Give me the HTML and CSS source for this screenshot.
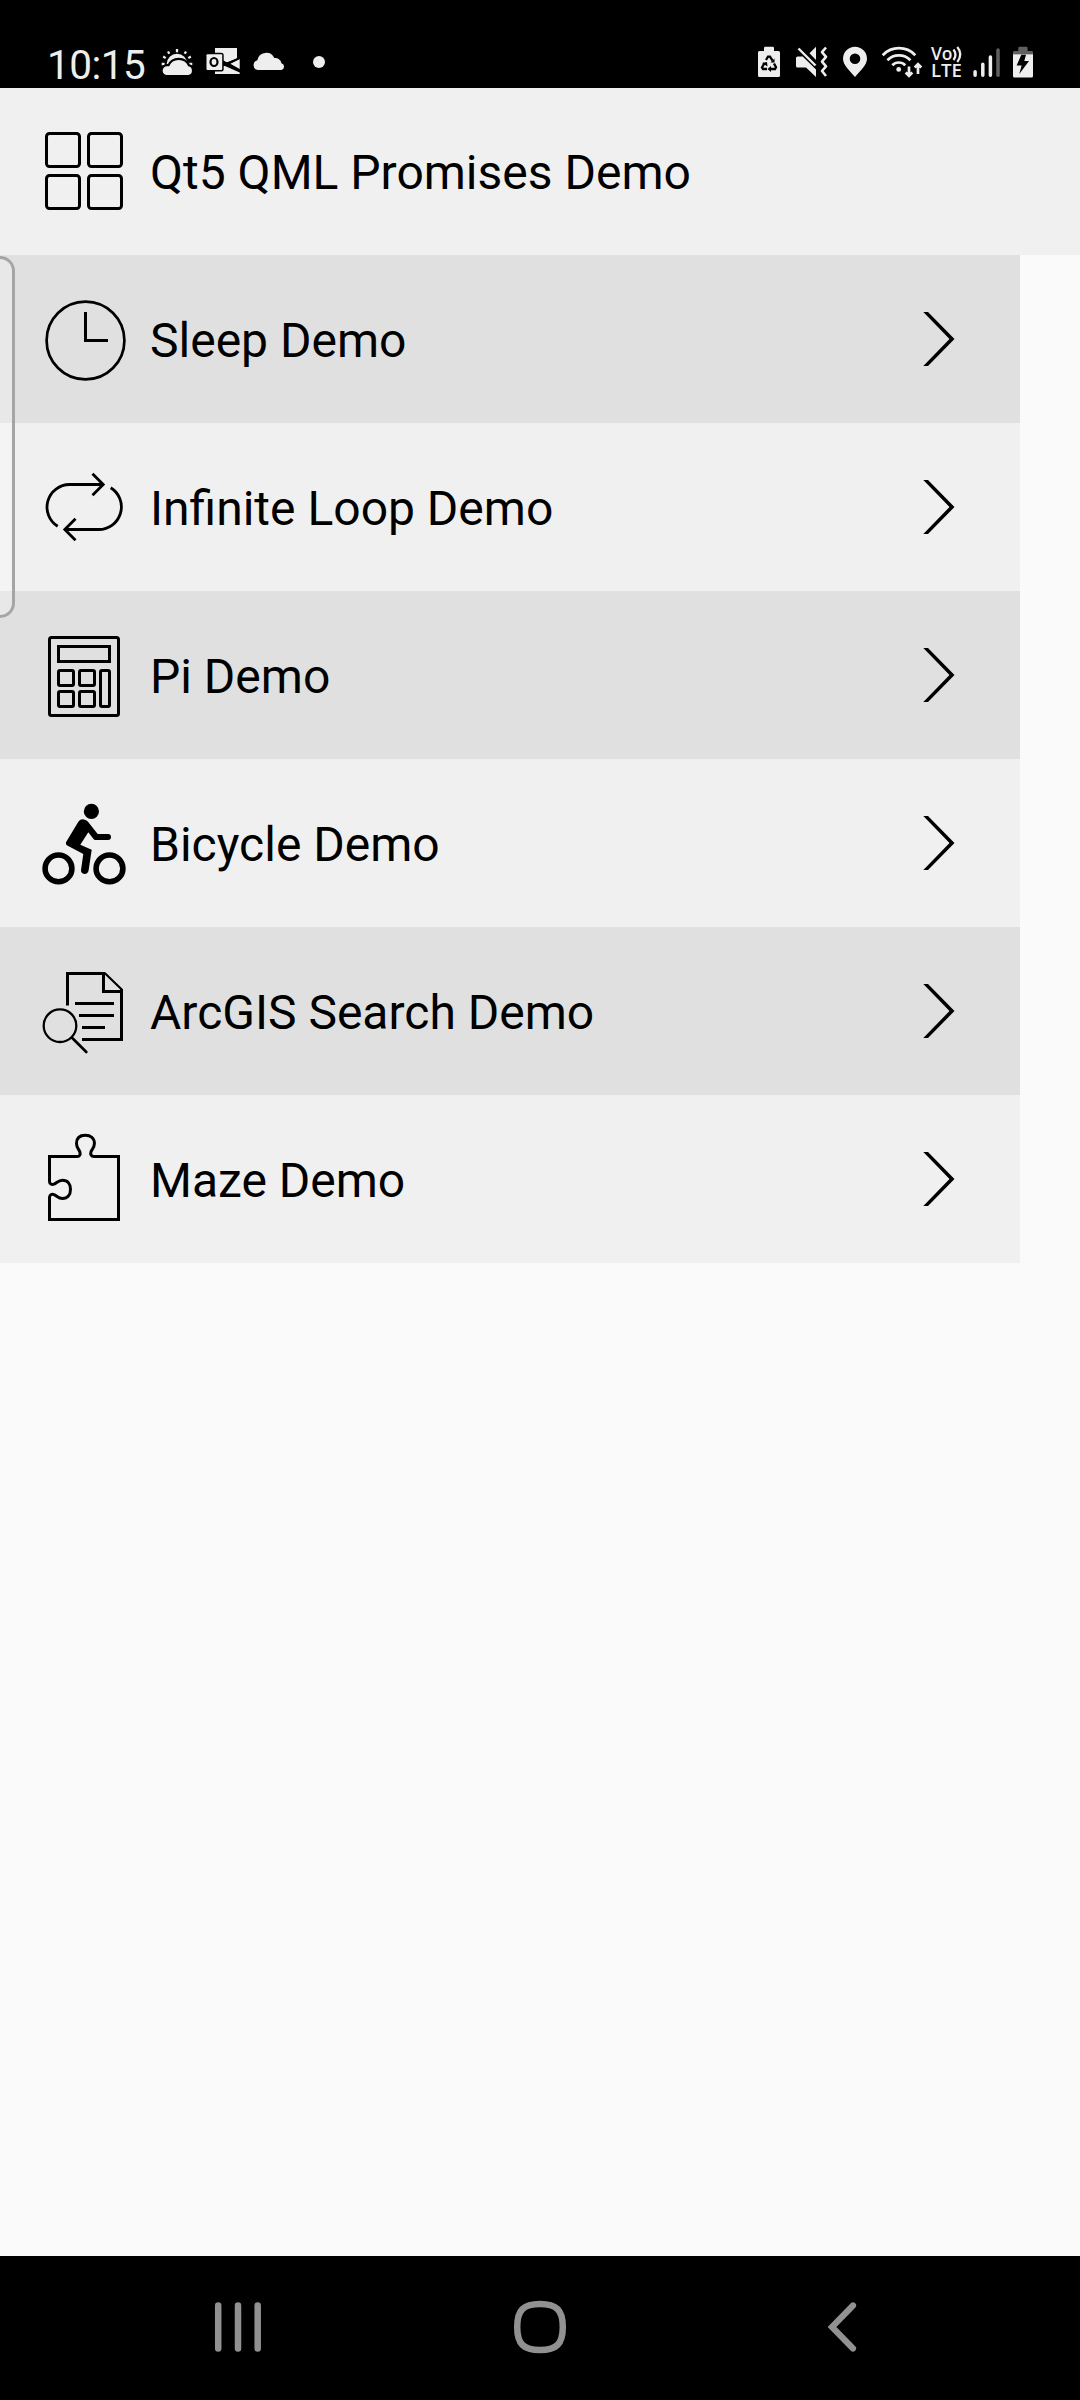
FILE: index.html
```html
<!DOCTYPE html>
<html lang="en">
<head>
<meta charset="utf-8">
<title>Qt5 QML Promises Demo</title>
<link rel="stylesheet" href="styles.css">
</head>
<body>
<div class="status-bar">
  <span class="clock">10:15</span>
  <svg class="weather" width="32" height="40" viewBox="161 44 32 40">
    <circle cx="177" cy="64" r="10.3" fill="#eee"/>
    <path d="M177 49v3.200M168 51.500l1.300 2.300M186 51.500l-1.300 2.300M163.200 56.500l2.500 1.600M190.800 56.500l-2.500 1.600M161.700 64h3M192.300 64h-3" stroke="#eee" stroke-width="2.300"/>
    <path d="M167 75a4.300 4.300 0 0 1 0-8.700h2.200a10.300 10.300 0 0 1 19 0a4.400 4.400 0 0 1 0 8.700z" fill="#eee" stroke="#000" stroke-width="4.500" paint-order="stroke"/>
  </svg>
  <svg class="mail" width="34" height="40" viewBox="206 44 34 40">
    <path d="M215 48h22v10.500l-10.500 4l-11.500-4zM239.700 58.800v10.400l-9.500-5.400zM215 74v-8h10l14.700 6.500v1.500z" fill="#eee"/>
    <path d="M222 61l18 9.500M227 64l13-6" stroke="#000" stroke-width="2"/>
    <rect x="206.500" y="54.300" width="15.700" height="15.700" rx="1" fill="#eee" stroke="#000" stroke-width="3" paint-order="stroke"/>
    <ellipse cx="214" cy="62" rx="3.500" ry="4" fill="none" stroke="#000" stroke-width="2.200"/>
  </svg>
  <svg class="cloud" width="34" height="40" viewBox="252 44 34 40">
    <path d="M257.800 70a5 5 0 0 1-.5-9.800a9 9 0 0 1 17-2.100a6.200 6.200 0 0 1 7.200 5.100a3.500 3.500 0 0 1-.2 6.800z" fill="#eee"/>
  </svg>
  <svg class="more" width="12" height="40" viewBox="313 44 12 40"><circle cx="319" cy="62" r="6" fill="#eee"/></svg>

  <div class="system-icons">
    <svg class="saver" width="22" height="40" viewBox="758 44 22 40">
      <path d="M764 51v-3q0-1.300 1.300-1.300h7.400q1.300 0 1.300 1.300v3h4.500q1.500 0 1.500 1.500v23q0 1.500-1.500 1.500h-19q-1.500 0-1.500-1.500v-23q0-1.500 1.500-1.500z" fill="#eee"/>
      <path d="M766 60l2-3.300h2l2.500 4M774 63.500l2 3.800l-1 1.700h-5M767 69h-4l-1-1.500l2.500-4.500" fill="none" stroke="#000" stroke-width="2.300"/>
      <path d="M774.500 58.500v4h-4zM771 66v6l-3.500-3zM762 63l5-1l.5 4.500z" fill="#000"/>
    </svg>
    <svg class="mute" width="32" height="40" viewBox="796 44 32 40">
      <path d="M796 58q0-1.500 1.500-1.500h5.200l13.300 13v7.500l-10-9.500h-8.500q-1.500 0-1.500-1.500zM816 46.700v13.300l-6.500-6.700z" fill="#eee"/>
      <path d="M798.500 48.500l17 17" stroke="#eee" stroke-width="2.400"/>
      <path d="M826 47.500l-4 4.700l4 4.700l-4 4.700l4 4.700l-4 4.700l4 5" fill="none" stroke="#eee" stroke-width="2.600" stroke-linejoin="round"/>
    </svg>
    <svg class="pin" width="24" height="40" viewBox="843 44 24 40">
      <path fill-rule="evenodd" d="M855 77C850 71 843 65 843 58.700a12 12 0 0 1 24 0C867 65 860 71 855 77zM849.700 58.700a5.300 5.300 0 1 0 10.600 0a5.300 5.300 0 1 0-10.600 0z" fill="#eee"/>
    </svg>
    <svg class="wifi" width="42" height="40" viewBox="881 44 42 40">
      <g fill="none" stroke="#eee" stroke-width="2.700">
        <path d="M882.700 55.200a22.500 22.500 0 0 1 32.600 0M887.400 60.300a16 16 0 0 1 23 0M892.300 65.300a9 9 0 0 1 13 0"/>
        <path d="M909 66.500v9M905.700 72.500l3.300 3.300l3.300-3.300M918 74v-9M914.700 67.500l3.300-3.300l3.300 3.300"/>
      </g>
      <circle cx="898.700" cy="69.400" r="2.400" fill="#eee"/>
    </svg>
    <svg class="volte" width="32" height="40" viewBox="931 44 32 40">
      <text class="volte-text" x="931" y="60.300" textLength="21.500" lengthAdjust="spacingAndGlyphs">Vo</text>
      <text class="volte-text" x="931" y="77" textLength="31" lengthAdjust="spacingAndGlyphs">LTE</text>
      <path d="M953.500 49.500q3.800 5.300 0 10.500M957.300 47q6 7.300 0 15" fill="none" stroke="#eee" stroke-width="2.300"/>
    </svg>
    <svg class="signal" width="27" height="40" viewBox="973 44 27 40">
      <path d="M975.100 71.700v3.600M982.800 64.300v11M990.400 57v18.300" stroke="#eee" stroke-width="3.500" stroke-linecap="round"/>
      <path d="M998 50v25.300" stroke="#606060" stroke-width="3.500" stroke-linecap="round"/>
    </svg>
    <svg class="battery" width="20" height="40" viewBox="1013 44 20 40">
      <path d="M1013 54.300v-2q0-1.300 1.300-1.300h4v-3q0-1.300 1.300-1.300h6.700q1.300 0 1.300 1.300v3h4q1.400 0 1.400 1.300v2z" fill="#606060"/>
      <path d="M1013 54.300h20v21.700q0 1.500-1.500 1.500h-17q-1.500 0-1.500-1.500z" fill="#eee"/>
      <path d="M1021.300 54.700h4.700l-1.700 6.300h4.700l-9.700 13l2.300-8.500h-5z" fill="#000"/>
    </svg>
  </div>
</div>

<header class="title-bar">
  <svg class="icon" viewBox="0 0 96 96">
    <rect x="10.500" y="10.500" width="33" height="33" rx="3"/><rect x="52.500" y="10.500" width="33" height="33" rx="3"/>
    <rect x="10.500" y="52.500" width="33" height="33" rx="3"/><rect x="52.500" y="52.500" width="33" height="33" rx="3"/>
  </svg>
  <h1 class="label">Qt5 QML Promises Demo</h1>
</header>

<main class="content">
  <ul class="menu">
    <li class="row">
      <svg class="icon" viewBox="0 0 96 96"><circle cx="49.500" cy="49.500" r="38.900" stroke-width="2.700"/><path d="M49.500 21v28.500H72"/></svg>
      <span class="label">Sleep Demo</span>
      <svg class="chevron" viewBox="0 0 32 54"><path d="M.3 0H5L31.500 27L5 54H.3L26.500 27z"/></svg>
    </li>
    <li class="row">
      <svg class="icon" viewBox="0 0 96 96"><path d="M67 25.500H33.700A22.600 22.600 0 0 0 21.700 67.300M56.500 14.800L67.200 25.500L56.500 36.200M74.700 28.700A22.600 22.600 0 0 1 62.500 70.500H29M39.500 59.800L28.800 70.500L39.500 81.200" stroke-width="2.800"/></svg>
      <span class="label">Infinite Loop Demo</span>
      <svg class="chevron" viewBox="0 0 32 54"><path d="M.3 0H5L31.500 27L5 54H.3L26.500 27z"/></svg>
    </li>
    <li class="row">
      <svg class="icon" viewBox="0 0 96 96">
        <rect x="13.500" y="10.500" width="69" height="78" rx="2"/><rect x="22.500" y="19.500" width="51" height="15"/>
        <rect x="22.500" y="43.500" width="15" height="15" rx="1.500"/><rect x="43.500" y="43.500" width="15" height="15" rx="1.500"/>
        <rect x="22.500" y="64.500" width="15" height="15" rx="1.500"/><rect x="43.500" y="64.500" width="15" height="15" rx="1.500"/>
        <rect x="64.500" y="43.500" width="9" height="36" rx="1.500"/>
      </svg>
      <span class="label">Pi Demo</span>
      <svg class="chevron" viewBox="0 0 32 54"><path d="M.3 0H5L31.500 27L5 54H.3L26.500 27z"/></svg>
    </li>
    <li class="row">
      <svg class="icon" viewBox="0 0 96 96">
        <circle cx="22.500" cy="73.400" r="13.400" stroke-width="5.600"/><circle cx="73.500" cy="73.400" r="13.400" stroke-width="5.600"/>
        <circle class="solid" cx="55.400" cy="16.400" r="7.600"/>
        <path class="solid" d="M42.500 26.500Q44.500 23.800 48 24.400Q50.200 24.700 51.800 26.600L61.700 39H72a3 3 0 0 1 0 6H59.200Q58.300 45 57.700 44.200L52.300 37.300L44.300 49.700L55.700 54.700L52.600 75.500Q51.800 79 48.500 78.900Q44.800 78.500 45 75L47.300 59L30.800 50.300Q29.500 49 30 47.200z"/>
      </svg>
      <span class="label">Bicycle Demo</span>
      <svg class="chevron" viewBox="0 0 32 54"><path d="M.3 0H5L31.500 27L5 54H.3L26.500 27z"/></svg>
    </li>
    <li class="row">
      <svg class="icon" viewBox="0 0 96 96">
        <path d="M31.500 42.500V10.500H69M67.500 10.500V28.500H85.500M39 40.500H78M43 52.500H78M46 64.500H69M85.500 26V76.500H46"/>
        <path d="M68.700 10L86 26.700" stroke-width="2.200"/>
        <circle cx="24" cy="62.700" r="16.300" stroke-width="2.300"/>
        <path d="M36 74.700L50.300 89" stroke-width="2.700" stroke-linecap="round"/>
      </svg>
      <span class="label">ArcGIS Search Demo</span>
      <svg class="chevron" viewBox="0 0 32 54"><path d="M.3 0H5L31.500 27L5 54H.3L26.500 27z"/></svg>
    </li>
    <li class="row">
      <svg class="icon" viewBox="0 0 96 96">
        <path d="M13.500 51V25.500H41C44 25.500 44.600 23.300 43.800 20.800C43 18.300 40.500 17 40.500 12.500C40.500 7 44 4.300 49.300 4.300S58.400 7 58.400 12.500C58.400 17 55.800 18.300 55 20.800C54.200 23.300 55 25.500 58 25.500H82.500V88.500H13.500V66.500C13.500 63.500 16 62.700 18.500 63.800C21 65 22.500 67.400 26.500 67.400C31.500 67.400 34.500 64 34.500 58.300S31.500 49.300 26.500 49.300C22.500 49.300 21 51.700 18.500 52.900C16 54 13.500 53.300 13.500 50.500"/>
      </svg>
      <span class="label">Maze Demo</span>
      <svg class="chevron" viewBox="0 0 32 54"><path d="M.3 0H5L31.500 27L5 54H.3L26.500 27z"/></svg>
    </li>
  </ul>
  <div class="edge-handle"></div>
</main>

<nav class="nav-bar">
  <svg width="48" height="56" viewBox="214 2299 48 56"><path d="M218.200 2305.500v43M238 2305.500v43M257.700 2305.500v43" stroke-width="6.500" stroke-linecap="round"/></svg>
  <svg class="home" width="54" height="56" viewBox="513 2299 54 56"><path d="M540 2304C556.500 2304 562.800 2310 562.800 2327S556.500 2350 540 2350S517.200 2344 517.200 2327S523.500 2304 540 2304z" stroke-width="6.500"/></svg>
  <svg class="back" width="32" height="56" viewBox="827 2299 32 56"><path d="M853 2305.500L832 2327L853 2348.500" stroke-width="6.200" stroke-linecap="round"/></svg>
</nav>
</body>
</html>
```
FILE: styles.css
```css
* { box-sizing: border-box; }

body {
  margin: 0;
  width: 1080px;
  height: 2400px;
  display: flex;
  flex-direction: column;
  background: #fafafa;
  color: #000;
  font-family: Roboto, sans-serif;
}

svg { display: block; flex: none; }

.status-bar {
  position: relative;
  z-index: 1;
  display: flex;
  align-items: flex-start;
  height: 88px;
  padding: 44px 47px 0;
  background: #000;
  color: #eee;
}

.clock {
  width: 114px;
  padding-top: 1px;
  font-size: 40.5px;
  line-height: 40px;
  letter-spacing: -0.5px;
}

.mail { margin-left: 13px; }
.cloud { margin-left: 12px; }
.more { margin-left: 27px; }

.system-icons { display: flex; margin-left: auto; }
.mute { margin-left: 16px; }
.pin { margin-left: 15px; }
.wifi { margin-left: 14px; }
.volte { margin-left: 8px; overflow: visible; }
.signal { margin-left: 10px; }
.battery { margin-left: 13px; }

.volte-text {
  font: 600 18px "Open Sans", sans-serif;
  fill: #eee;
}

.title-bar,
.row {
  display: flex;
  align-items: center;
  height: 168px;
  padding: 0 65px 0 36px;
  background: #f0f0f0;
}

.title-bar {
  flex: none;
  margin-top: -1px;
}

.row:nth-child(odd) { background: #e0e0e0; }

.icon {
  width: 96px;
  height: 96px;
  margin-right: 18px;
  fill: none;
  stroke: #000;
  stroke-width: 3;
}

.icon .solid {
  fill: #000;
  stroke: none;
}

.label {
  flex: 1;
  margin: 0;
  padding-top: 4px;
  font-size: 48px;
  font-weight: 400;
  line-height: 56px;
}

.chevron {
  width: 32px;
  height: 54px;
}

.content {
  position: relative;
  flex: 1;
}

.menu {
  width: 1020px;
  margin: 0;
  padding: 0;
  list-style: none;
}

.edge-handle {
  position: absolute;
  left: 0;
  top: 1px;
  width: 15px;
  height: 362px;
  border: 3px solid #a5a5a5;
  border-left: 0;
  border-radius: 0 15px 15px 0;
  background: rgba(255, 255, 255, 0.28);
}

.nav-bar {
  display: flex;
  height: 144px;
  padding: 43px 0 0 214px;
  background: #000;
  fill: none;
  stroke: #919191;
}

.home { margin-left: 251px; }
.back { margin-left: 260px; }
```
